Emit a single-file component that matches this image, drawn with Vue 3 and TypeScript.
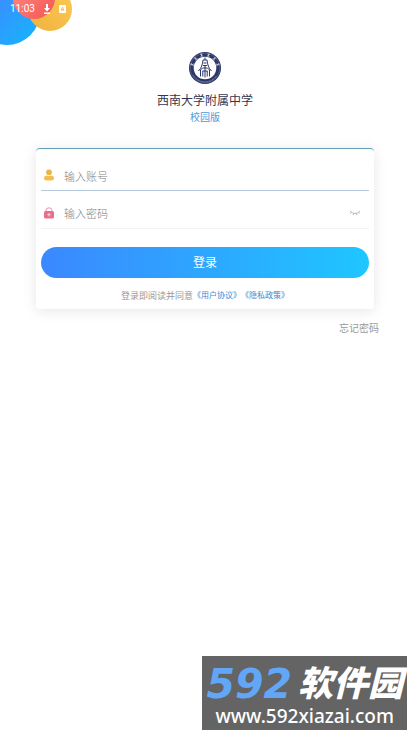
<script setup lang="ts">
import { ref } from 'vue'

const account = ref('')
const password = ref('')
const passwordVisible = ref(false)
const ringMarks = [-75, -45, -15, 15, 45, 75]
</script>

<template>
  <div class="page">
    <header class="status">
      <svg class="blobs" width="80" height="50" viewBox="0 0 80 50" aria-hidden="true">
        <defs>
          <linearGradient id="blue" x1="0" y1="0" x2="1" y2="1">
            <stop offset="0.3" stop-color="#3c8cff" />
            <stop offset="1" stop-color="#12b8fb" />
          </linearGradient>
          <linearGradient id="yellow" x1="0" y1="1" x2="1" y2="0">
            <stop offset="0" stop-color="#f0b13c" />
            <stop offset="1" stop-color="#fbcb55" />
          </linearGradient>
          <linearGradient id="red" x1="0" y1="0" x2="1" y2="1">
            <stop offset="0.3" stop-color="#ff7d78" />
            <stop offset="1" stop-color="#f2554f" />
          </linearGradient>
        </defs>
        <circle cx="7" cy="12" r="33" fill="url(#blue)" />
        <circle cx="50" cy="9" r="22" fill="url(#yellow)" />
        <circle cx="34" cy="-2" r="21" fill="url(#red)" />
      </svg>
      <span class="clock">11:03</span>
      <svg width="8" height="10" viewBox="0 0 8 10" aria-hidden="true">
        <path d="M3 0h2v4h2L4 7.500 1 4h2zM1 8.500h6V10H1z" fill="#fff" />
      </svg>
      <svg class="badge" width="7" height="8" viewBox="0 0 7 8" aria-hidden="true">
        <rect width="7" height="8" rx="1" fill="#fff" />
        <path d="M2 6 3.500 2 5 6M2.500 4.700h2" fill="none" stroke="#efb64c" stroke-width=".9" />
      </svg>
    </header>

    <main>
      <section class="brand">
        <svg class="seal" width="34" height="34" viewBox="0 0 34 34" role="img" aria-label="校徽">
          <circle cx="17" cy="17" r="16" fill="#2b3767" />
          <circle cx="17" cy="17" r="14.800" fill="none" stroke="#7d87a8" stroke-width=".4" />
          <circle cx="17" cy="17" r="11.300" fill="#fff" />
          <g v-for="angle in ringMarks" :key="angle" :transform="`rotate(${angle} 17 17)`">
            <path d="M15.800 2.700h2.400M17 2.200v2.800M15.900 5.300 17 4l1.200 1.300" fill="none" stroke="#dde1ec" stroke-width=".65" />
          </g>
          <path d="M5.500 24.500a13.500 13.500 0 0 0 23 0" fill="none" stroke="#929bb8" stroke-width="1" stroke-dasharray="1 .6" />
          <g fill="none" stroke="#2b3767" stroke-width="1">
            <path d="M17 6.500v2.500M15 9h4M15 9c-.5 4.500-1.500 8-4.500 11M19 9c.5 4.500 1.500 8 4.500 11" />
            <path d="M15.500 12h3M15 14.500h4M12.500 25.500v-6.500l2-2h5l2 2v6.500M14.500 20h5M17 14.500v12M14.800 20v5.500M19.200 20v5.500" />
          </g>
        </svg>
        <h1>西南大学附属中学</h1>
        <p>校园版</p>
      </section>

      <form class="card" @submit.prevent>
        <div class="field focused">
          <label for="account" aria-label="账号">
            <svg width="12" height="12" viewBox="0 0 12 12" aria-hidden="true">
              <circle cx="6" cy="3.300" r="2.900" fill="#e9b544" />
              <path d="M1 9.300C1 7.500 2.500 6.800 4 6.600q2 1 4 0c1.500.2 3 .9 3 2.700 0 1.600-1 2.200-2.500 2.200h-5C2 11.500 1 10.900 1 9.300Z" fill="#f3bd50" />
            </svg>
          </label>
          <input id="account" v-model="account" type="text" placeholder="输入账号" autocomplete="username" />
        </div>
        <div class="field">
          <label for="password" aria-label="密码">
            <svg width="12" height="12" viewBox="0 0 12 12" aria-hidden="true">
              <path d="M3 5V3.500a3 2.700 0 0 1 6 0V5" fill="none" stroke="#ee91a3" stroke-width="1" />
              <rect x="1" y="4" width="10" height="7.500" rx="1.500" fill="#e8708b" />
              <path d="M6 6v3.400M4.300 7.700h3.400" stroke="#fbdfe5" stroke-width=".9" />
            </svg>
          </label>
          <input id="password" v-model="password" :type="passwordVisible ? 'text' : 'password'" placeholder="输入密码" autocomplete="current-password" />
          <button class="eye" type="button" aria-label="显示密码" @click="passwordVisible = !passwordVisible">
            <svg width="12" height="6" viewBox="0 0 12 6" aria-hidden="true">
              <path d="M1 1q5 5 10 0M2.500 2.200 1.200 3.700M4.700 3.300 4.200 5.200M7.300 3.300l.5 1.900M9.500 2.200l1.300 1.500" fill="none" stroke="#aaa" stroke-width=".8" />
            </svg>
          </button>
        </div>
        <button class="login" type="submit">登录</button>
        <p class="terms">登录即阅读并同意<a href="#user">《用户协议》</a><a href="#privacy">《隐私政策》</a></p>
      </form>
      <div class="help"><a href="#forgot">忘记密码</a></div>
    </main>

    <footer class="mark">
      <div class="mark-name"><span class="digits">592</span><span class="hanzi">软件园</span></div>
      <div class="mark-url">www.592xiazai.com</div>
    </footer>
  </div>
</template>

<style>
body {
  background: #fff;
}
</style>

<style scoped>
.page {
  position: relative;
  display: flex;
  flex-direction: column;
  min-height: 100vh;
  overflow: hidden;
  box-sizing: border-box;
  font-family: Roboto, "Noto Sans CJK SC", sans-serif;
}
.status {
  display: flex;
  align-items: center;
  height: 17px;
  padding-left: 10px;
  color: #fff;
  font-size: 10px;
}
.status > * {
  position: relative;
}
.status .blobs {
  position: absolute;
  top: 0;
  left: 0;
}
.clock {
  margin-right: 8px;
}
.badge {
  margin-left: 8px;
}
.brand {
  display: flex;
  flex-direction: column;
  align-items: center;
  padding-top: 34px;
}
h1 {
  margin: 7px 0 0;
  color: #34364f;
  font-size: 12px;
  font-weight: 400;
  line-height: 18px;
}
.brand p {
  margin: 0;
  color: #4a9ddb;
  font-size: 10px;
  line-height: 16px;
}
.card {
  margin: 22px 36px 0;
  padding: 9px 5px 5px;
  border-top: 1px solid #5f9fb8;
  border-radius: 4px;
  background: #fff;
  box-shadow: 0 2px 14px rgba(0, 0, 0, 0.1);
}
.field {
  display: flex;
  align-items: center;
  box-sizing: border-box;
  height: 38px;
  padding-top: 6px;
  border-bottom: 1px solid #f3f3f3;
}
.field.focused {
  height: 33px;
  padding-top: 2px;
  border-bottom: 1px solid #b5c9dc;
}
.field label {
  display: flex;
  padding: 0 9px 0 2px;
}
.field input {
  flex: 1;
  min-width: 0;
  height: 28px;
  padding: 4px 0 0;
  box-sizing: border-box;
  border: 0;
  outline: 0;
  background: transparent;
  color: #555;
  font: 300 11px/24px Roboto, "Noto Sans CJK SC", sans-serif;
}
.field input::placeholder {
  color: #808080;
  opacity: 1;
}
button {
  padding: 0;
  border: 0;
  cursor: pointer;
}
.eye {
  display: flex;
  padding: 4px 8px;
  background: transparent;
}
.login {
  display: block;
  width: 100%;
  height: 31px;
  margin-top: 18px;
  padding-top: 1px;
  border-radius: 16px;
  background: linear-gradient(90deg, #3b88ff, #1fc6ff);
  color: #fff;
  font: 400 12px/30px Roboto, "Noto Sans CJK SC", sans-serif;
}
a {
  text-decoration: none;
}
.terms {
  display: flex;
  justify-content: center;
  margin: 10px 0 0;
  color: #999;
  font-size: 9px;
  line-height: 16px;
  white-space: nowrap;
}
.terms a {
  color: #4387d0;
  font-size: 8px;
}
.help {
  padding: 12px 31px 0;
  text-align: right;
  font-size: 10px;
  line-height: 16px;
}
.help a {
  color: #999;
}
.mark {
  align-self: flex-end;
  box-sizing: border-box;
  height: 74px;
  margin: auto 3px 1px 0;
  padding: 9px 4px 0;
  background: #646464;
  color: #fff;
  white-space: nowrap;
}
.mark-name {
  display: flex;
  gap: 6px;
  height: 41px;
}
.digits {
  color: #62a6f8;
  font: italic 700 41px/38px "DejaVu Sans", sans-serif;
}
.hanzi {
  font: italic 900 35px/32px "Noto Sans CJK SC", sans-serif;
}
.mark-url {
  font: 500 19px/21px "Noto Sans", "Open Sans", sans-serif;
  text-align: center;
}
</style>
